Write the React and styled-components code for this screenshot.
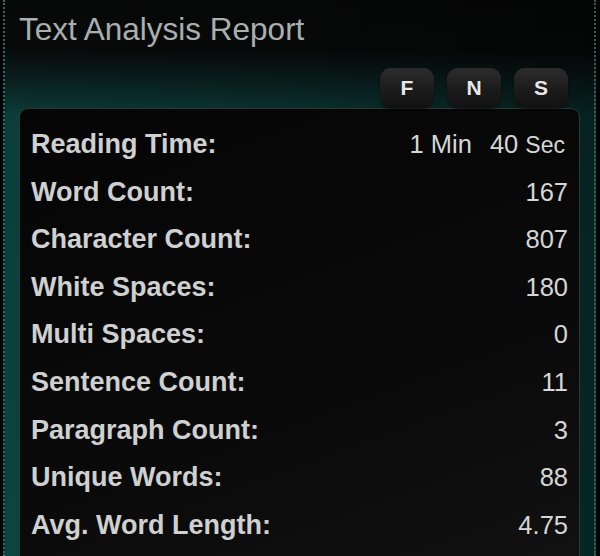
import React from "react";
import styled, { createGlobalStyle } from "styled-components";

const GlobalStyle = createGlobalStyle`
  html, body {
    margin: 0;
    padding: 0;
    background: #050505;
    height: 100%;
    overflow: hidden;
  }
  #root {
    height: 100%;
  }
`;

const Panel = styled.div`
  box-sizing: border-box;
  height: 100%;
  margin: 0 4px 0 3px;
  padding: 0 14px;
  border-left: 2px dotted #2d6e69;
  border-right: 2px dotted #3c5755;
  font-family: "Liberation Sans", Arial, sans-serif;
  background:
    linear-gradient(90deg, rgba(0, 0, 0, 0) 0%, rgba(0, 0, 0, 0.15) 50%, rgba(0, 0, 0, 0.45) 100%),
    linear-gradient(180deg, #070808 0%, #080a0a 9%, #0a1e1d 14%, #0b3e3a 21%, #0b4540 100%);
`;

const Title = styled.h1`
  margin: 0;
  padding: 11px 0 0 0;
  font-size: 31.5px;
  line-height: 36px;
  font-weight: normal;
  color: #a9afb0;
`;

const ModeBar = styled.div`
  display: flex;
  justify-content: flex-end;
  gap: 13px;
  padding: 21px 12px 0 0;
`;

const ModeButton = styled.button`
  width: 54px;
  height: 40px;
  border: none;
  border-radius: 11px;
  background: linear-gradient(180deg, #2c2c2c 0%, #1b1b1b 55%, #111 100%);
  box-shadow: 0 1px 2px rgba(0, 0, 0, 0.6);
  color: #e8e8e8;
  font-family: "Liberation Sans", Arial, sans-serif;
  font-size: 21px;
  font-weight: bold;
  padding: 0;
  cursor: pointer;
`;

const Card = styled.div`
  border: 1px solid #2c3838;
  border-bottom: none;
  border-radius: 9px 9px 0 0;
  background: linear-gradient(160deg, #050505 0%, #0a0a0a 60%, #121212 100%);
  padding: 12px 11px 40px 11px;
`;

const Row = styled.div`
  display: flex;
  justify-content: space-between;
  align-items: baseline;
  height: 47.6px;
  line-height: 47.6px;
`;

const Label = styled.span`
  font-size: 27px;
  font-weight: bold;
  color: #cfd0d0;
`;

const Value = styled.span`
  font-size: 25.5px;
  color: #d6d6d6;
`;

const Unit = styled.span`
  font-size: ${(p) => p.$size}px;
  margin-right: ${(p) => p.$gap || 0}px;
`;

const stats = [
  ["Word Count:", "167"],
  ["Character Count:", "807"],
  ["White Spaces:", "180"],
  ["Multi Spaces:", "0"],
  ["Sentence Count:", "11"],
  ["Paragraph Count:", "3"],
  ["Unique Words:", "88"],
  ["Avg. Word Length:", "4.75"],
];

export default function App() {
  return (
    <>
      <GlobalStyle />
      <Panel>
        <Title>Text Analysis Report</Title>
        <ModeBar>
          <ModeButton>F</ModeButton>
          <ModeButton>N</ModeButton>
          <ModeButton>S</ModeButton>
        </ModeBar>
        <Card>
          <Row>
            <Label>Reading Time:</Label>
            <Value>
              1 <Unit $size={25.5} $gap={11}>Min</Unit> 40 <Unit $size={23} $gap={3}>Sec</Unit>
            </Value>
          </Row>
          {stats.map(([label, value]) => (
            <Row key={label}>
              <Label>{label}</Label>
              <Value>{value}</Value>
            </Row>
          ))}
        </Card>
      </Panel>
    </>
  );
}
